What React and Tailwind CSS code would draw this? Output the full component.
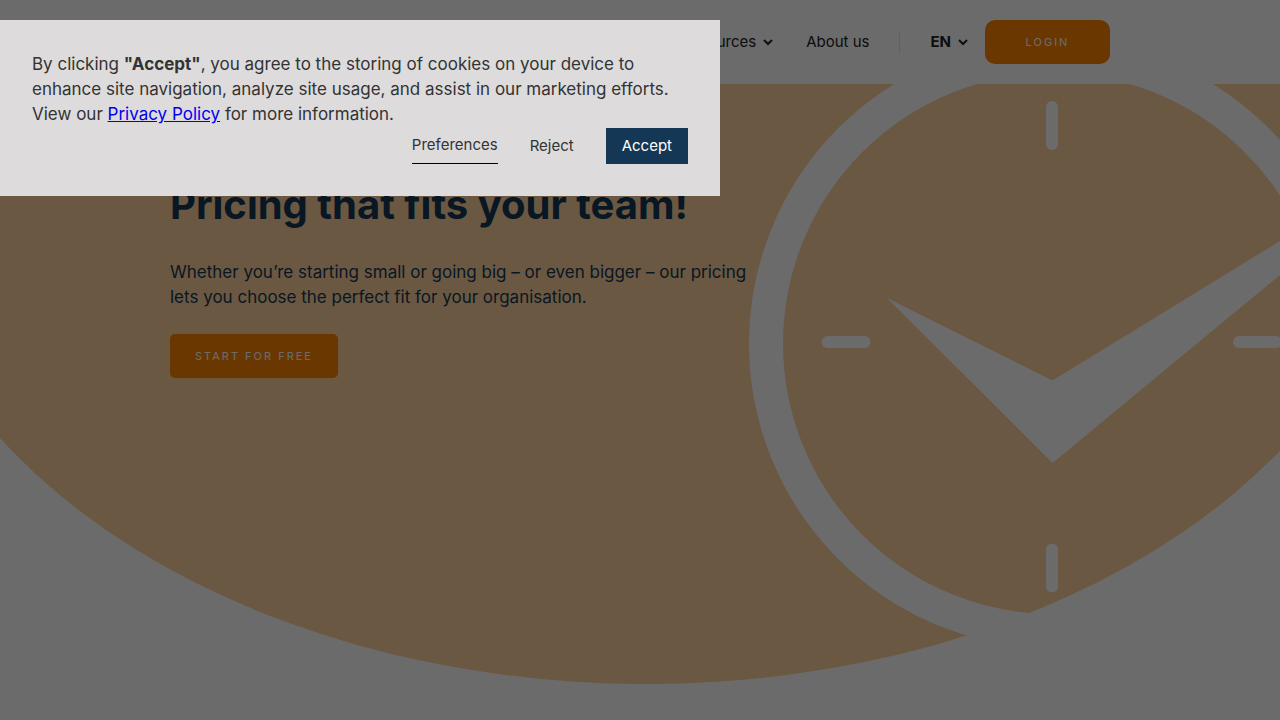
import React, { useState } from 'react';
import { ChevronDown } from 'lucide-react';

function Header() {
  return (
    <header className="bg-white">
      <div className="mx-auto flex h-[84px] max-w-[940px] items-center justify-end text-[15px] text-[#222]">
        <nav className="flex items-center gap-[30px]">
          <button type="button" className="flex items-center gap-1">
            Resources <ChevronDown size={16} strokeWidth={3} strokeLinecap="butt" strokeLinejoin="miter" />
          </button>
          <a href="#about">About us</a>
          <span className="h-[22px] w-px bg-[#e5e5e5]" />
          <button type="button" className="flex items-center gap-1 font-bold">
            EN <ChevronDown size={16} strokeWidth={3} strokeLinecap="butt" strokeLinejoin="miter" />
          </button>
        </nav>
        <a href="#login" className="ml-3.5 flex h-11 w-[125px] items-center justify-center rounded-[10px] bg-[#ff8300] text-[11px] tracking-[2px] text-white">
          LOGIN
        </a>
      </div>
    </header>
  );
}

function HeroArt() {
  return (
    <svg viewBox="0 0 1280 600" className="absolute inset-x-0 top-0 w-full" aria-hidden="true">
      <ellipse cx="646" cy="80" rx="760" ry="520" fill="#fcd29d" />
      <circle cx="1053.5" cy="259.6" r="287.5" fill="none" stroke="#fff" strokeWidth="34" />
      <g fill="#fff">
        <rect x="1046" y="17" width="12" height="49" rx="6" />
        <rect x="1046" y="459.5" width="12" height="49" rx="6" />
        <rect x="821.5" y="252" width="49" height="12" rx="6" />
        <rect x="1233" y="252" width="49" height="12" rx="6" />
        <path d="M887 214 L1052.5 296.5 L1280 157 L1280 191 L1052.5 379 Z" />
      </g>
    </svg>
  );
}

function Hero() {
  return (
    <section className="relative overflow-hidden pb-[342px]">
      <HeroArt />
      <div className="relative mx-auto max-w-[940px] pt-24 text-[#143755]">
        <h1 className="text-[40px] leading-[50px] font-bold">Pricing that fits your team!</h1>
        <p className="mt-[30px] max-w-[600px] text-[17px] leading-[25px]">
          Whether you’re starting small or going big – or even bigger – our pricing lets you choose the perfect fit for your organisation.
        </p>
        <a href="#start" className="mt-6 inline-flex h-11 w-[168px] items-center justify-center rounded-[5px] bg-[#ff8300] text-[11px] tracking-[2px] text-white">
          START FOR FREE
        </a>
      </div>
    </section>
  );
}

function CookieBanner({ onClose }) {
  return (
    <div className="fixed inset-0 z-50 bg-black/58">
      <div role="dialog" aria-label="Cookies" className="mt-5 max-w-[720px] bg-[#dddbdc] p-8 text-[#333]">
        <p className="text-[17px] leading-[25px]">
          By clicking <strong>"Accept"</strong>, you agree to the storing of cookies on your device to
          enhance site navigation, analyze site usage, and assist in our marketing efforts.
          View our <a href="#privacy" className="text-[#0000ee] underline">Privacy Policy</a> for more information.
        </p>
        <div className="mt-px flex justify-end gap-8 text-[15px]">
          <button type="button" className="h-9 border-b border-black">Preferences</button>
          <button type="button" onClick={onClose} className="h-9">Reject</button>
          <button type="button" onClick={onClose} className="h-9 bg-[#143755] px-4 text-white">Accept</button>
        </div>
      </div>
    </div>
  );
}

export default function App() {
  const [open, setOpen] = useState(true);

  return (
    <div className="min-h-screen bg-white font-['Inter',sans-serif]">
      <Header />
      <Hero />
      {open && <CookieBanner onClose={() => setOpen(false)} />}
    </div>
  );
}
